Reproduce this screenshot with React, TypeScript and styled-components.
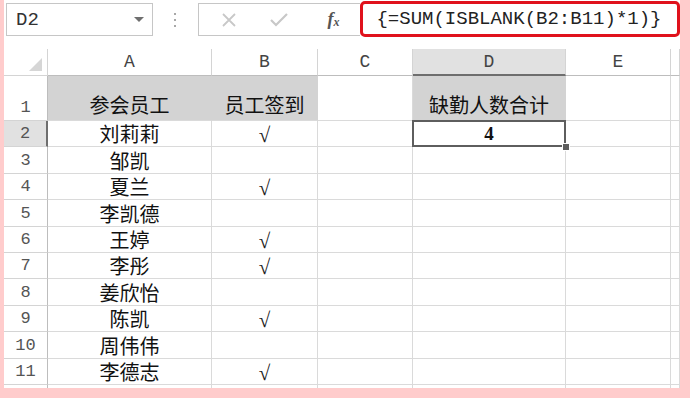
import styled, { createGlobalStyle } from "styled-components";

const GlobalStyle = createGlobalStyle`
  html, body {
    margin: 0;
    padding: 0;
    background: #ffcccc;
  }
`;

type Row = {
  name: string;
  signed: boolean;
};

const rows: Row[] = [
  { name: "刘莉莉", signed: true },
  { name: "邹凯", signed: false },
  { name: "夏兰", signed: true },
  { name: "李凯德", signed: false },
  { name: "王婷", signed: true },
  { name: "李彤", signed: true },
  { name: "姜欣怡", signed: false },
  { name: "陈凯", signed: true },
  { name: "周伟伟", signed: false },
  { name: "李德志", signed: true },
];

const columns = ["A", "B", "C", "D", "E", ""];

const App = () => {
  return (
    <Root>
      <GlobalStyle />
      <Panel>
        <Toolbar>
          <NameBox>
            <span>D2</span>
            <DropArrow />
          </NameBox>
          <Dots>
            <i />
            <i />
            <i />
          </Dots>
          <FxButtons>
            <ToolIcon>
              <svg width="16" height="16" viewBox="0 0 16 16">
                <path d="M2 2 L14 14 M14 2 L2 14" stroke="#c8c8c8" strokeWidth="1.8" fill="none" />
              </svg>
            </ToolIcon>
            <ToolIcon>
              <svg width="20" height="16" viewBox="0 0 20 16">
                <path d="M2 8 L7 13 L18 2" stroke="#c8c8c8" strokeWidth="2.2" fill="none" />
              </svg>
            </ToolIcon>
            <FxLabel>
              f<sub>x</sub>
            </FxLabel>
          </FxButtons>
          <FormulaBox>{"{=SUM(ISBLANK(B2:B11)*1)}"}</FormulaBox>
        </Toolbar>

        <Sheet>
          <Corner>
            <Triangle />
          </Corner>
          {columns.map((c) => (
            <ColHeader key={`h-${c}`} $active={c === "D"}>
              {c}
            </ColHeader>
          ))}

          <RowHeader>1</RowHeader>
          <Cell $fill>参会员工</Cell>
          <Cell $fill>员工签到</Cell>
          <Cell />
          <Cell $fill>缺勤人数合计</Cell>
          <Cell />
          <Cell />

          {rows.map((r, i) => (
            <RowGroup key={r.name} row={r} index={i + 2} />
          ))}

          <RowHeader />
          <Cell />
          <Cell />
          <Cell />
          <Cell />
          <Cell />
          <Cell />
        </Sheet>
      </Panel>
    </Root>
  );
};

const RowGroup = ({ row, index }: { row: Row; index: number }) => (
  <>
    <RowHeader $active={index === 2}>{index}</RowHeader>
    <Cell>{row.name}</Cell>
    <Cell>{row.signed ? <Check>√</Check> : null}</Cell>
    <Cell />
    {index === 2 ? (
      <SelectedCell>
        <Total>4</Total>
      </SelectedCell>
    ) : (
      <Cell />
    )}
    <Cell />
    <Cell />
  </>
);

export default App;

const Root = styled.div`
  width: 690px;
  height: 398px;
  background: #ffcccc;
  padding: 0 0 0 4px;
  box-sizing: border-box;
  overflow: hidden;
`;

const Panel = styled.div`
  width: 676px;
  height: 388px;
  background: #ffffff;
  display: flex;
  flex-direction: column;
`;

const Toolbar = styled.div`
  height: 50px;
  display: flex;
  align-items: flex-start;
  padding-top: 3px;
  box-sizing: border-box;
`;

const NameBox = styled.div`
  margin-left: 2px;
  width: 148px;
  height: 33px;
  box-sizing: border-box;
  border: 1px solid #c6c6c6;
  display: flex;
  align-items: center;
  justify-content: space-between;
  padding: 0 8px 0 9px;
  font-family: "Liberation Mono", monospace;
  font-size: 19px;
  color: #333;
`;

const DropArrow = styled.span`
  width: 0;
  height: 0;
  border-left: 5px solid transparent;
  border-right: 5px solid transparent;
  border-top: 5px solid #6f6f6f;
`;

const Dots = styled.div`
  width: 45px;
  height: 33px;
  display: flex;
  flex-direction: column;
  align-items: center;
  justify-content: center;
  gap: 4px;

  i {
    width: 2px;
    height: 2px;
    background: #a8a8a8;
  }
`;

const FxButtons = styled.div`
  width: 164px;
  height: 33px;
  box-sizing: border-box;
  border: 1px solid #c6c6c6;
  border-right: none;
  display: flex;
  align-items: center;
  padding-left: 18px;
  gap: 26px;
`;

const ToolIcon = styled.span`
  display: flex;
  align-items: center;
  justify-content: center;
  width: 24px;
`;

const FxLabel = styled.span`
  margin-left: 11px;
  font-family: "Liberation Serif", serif;
  font-style: italic;
  font-weight: bold;
  font-size: 18px;
  color: #555;

  sub {
    font-size: 12px;
    vertical-align: -1px;
  }
`;

const FormulaBox = styled.div`
  margin-top: -2px;
  width: 322px;
  height: 36px;
  box-sizing: border-box;
  border: 3px solid #e0121c;
  border-radius: 5px;
  display: flex;
  align-items: center;
  padding-left: 13px;
  font-family: "Liberation Mono", monospace;
  font-size: 19px;
  color: #222;
  white-space: nowrap;
`;

const Sheet = styled.div`
  display: grid;
  grid-template-columns: 44px 164px 106px 95px 153px 105px 9px;
  grid-template-rows: 27px 45px repeat(10, 26.4px) 10px;
  overflow: hidden;
`;

const Corner = styled.div`
  position: relative;
  border-right: 1px solid #d4d4d4;
  border-bottom: 1px solid #d4d4d4;
`;

const Triangle = styled.span`
  position: absolute;
  right: 5px;
  bottom: 4px;
  width: 0;
  height: 0;
  border-left: 13px solid transparent;
  border-bottom: 13px solid #d6d6d6;
`;

const ColHeader = styled.div<{ $active?: boolean }>`
  box-sizing: border-box;
  border-right: 1px solid #d4d4d4;
  border-bottom: ${(p) => (p.$active ? "2px solid #6e6e6e" : "1px solid #bdbdbd")};
  background: ${(p) => (p.$active ? "#e1e1e1" : "#ffffff")};
  display: flex;
  align-items: center;
  justify-content: center;
  font-family: "Liberation Mono", monospace;
  font-size: 18px;
  color: #444;
`;

const RowHeader = styled.div<{ $active?: boolean }>`
  box-sizing: border-box;
  border-right: ${(p) => (p.$active ? "2px solid #6e6e6e" : "1px solid #bdbdbd")};
  border-bottom: 1px solid #d4d4d4;
  background: ${(p) => (p.$active ? "#e1e1e1" : "#ffffff")};
  display: flex;
  align-items: flex-end;
  justify-content: center;
  padding-bottom: 2px;
  font-family: "Liberation Mono", monospace;
  font-size: 17px;
  line-height: 20px;
  color: #555;
`;

const Cell = styled.div<{ $fill?: boolean }>`
  box-sizing: border-box;
  border-right: 1px solid ${(p) => (p.$fill ? "#d3d3d3" : "#dadada")};
  border-bottom: 1px solid #dadada;
  background: ${(p) => (p.$fill ? "#d3d3d3" : "#ffffff")};
  display: flex;
  align-items: flex-end;
  justify-content: center;
  padding-bottom: ${(p) => (p.$fill ? "3px" : "0")};
  font-family: "Noto Sans CJK SC", sans-serif;
  font-size: 20px;
  line-height: 24px;
  color: #111;
  white-space: nowrap;
`;

const SelectedCell = styled(Cell)`
  position: relative;
  z-index: 2;
  align-items: center;

  &::after {
    content: "";
    position: absolute;
    inset: -1px -1px -1px -1px;
    border: 2px solid #5e5e5e;
  }

  &::before {
    content: "";
    position: absolute;
    right: -5px;
    bottom: -5px;
    width: 6px;
    height: 6px;
    background: #5e5e5e;
    border: 1px solid #ffffff;
    z-index: 3;
  }
`;

const Total = styled.span`
  font-family: "Liberation Serif", serif;
  font-weight: bold;
  font-size: 19px;
  color: #111;
`;

const Check = styled.span`
  font-family: "Liberation Serif", serif;
  font-size: 21px;
  line-height: 22px;
  color: #222;
`;
